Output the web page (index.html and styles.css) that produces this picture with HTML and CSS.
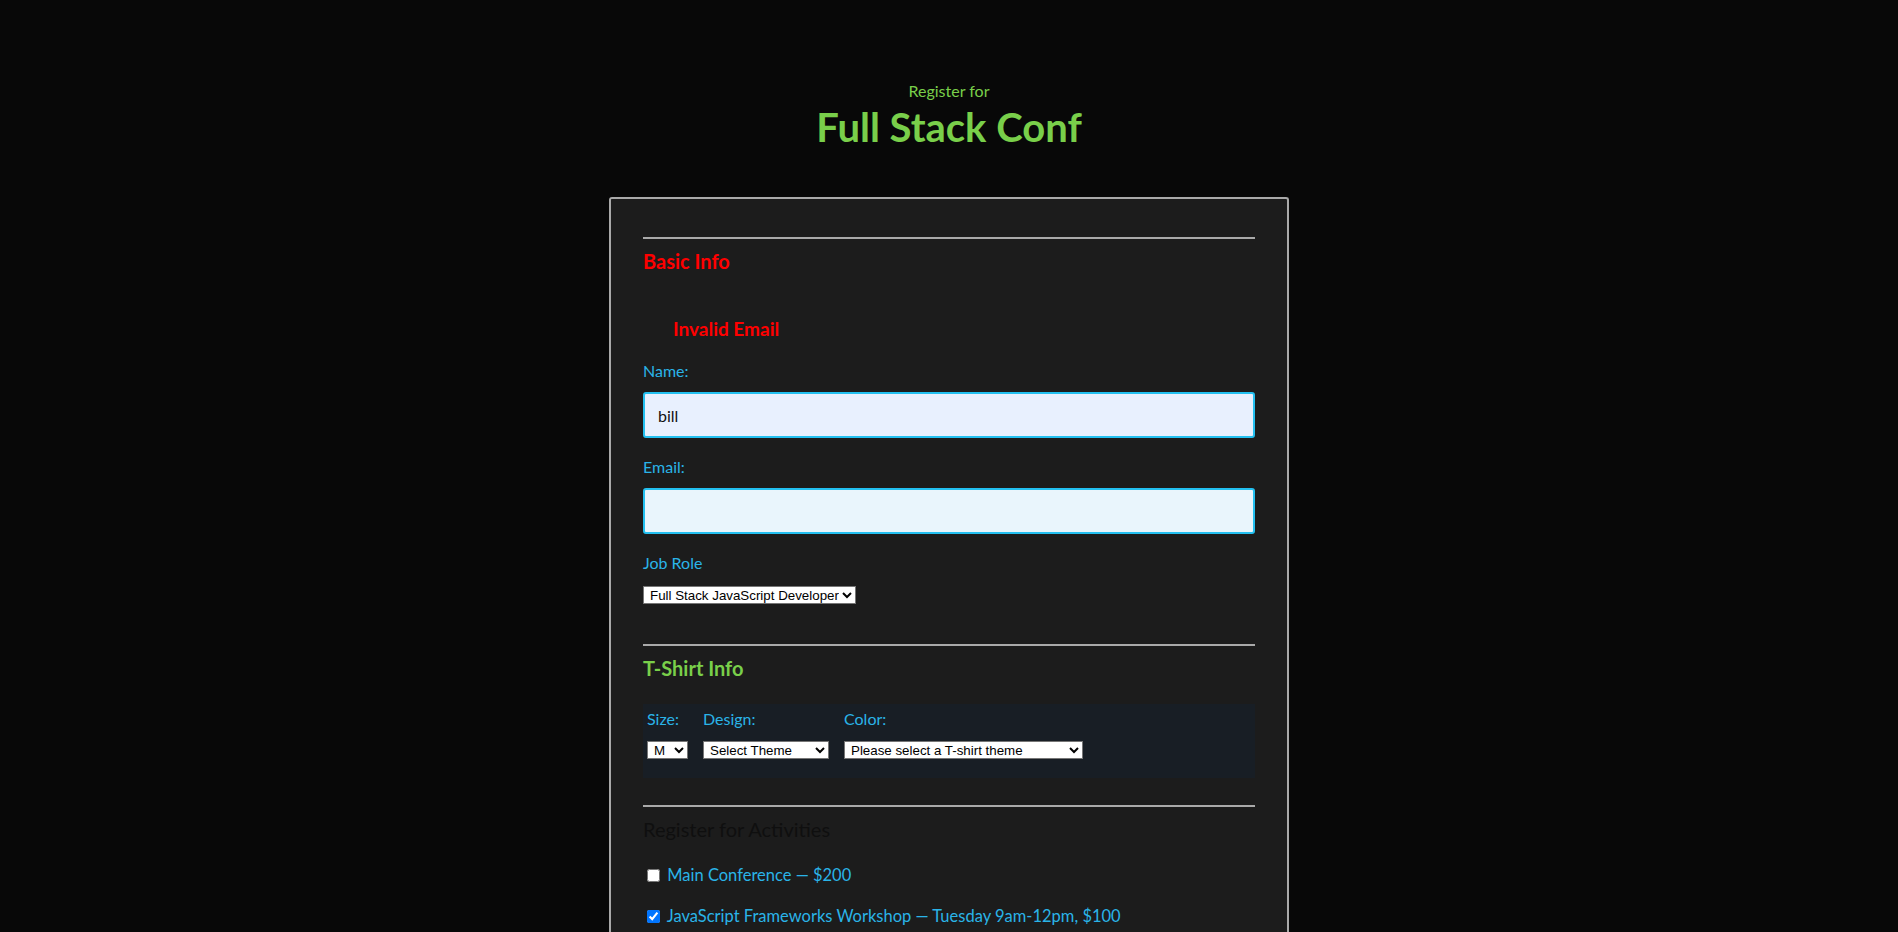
FILE: index.html
```html
<!DOCTYPE html>
<html lang="en">
<head>
<meta charset="utf-8">
<title>Full Stack Conf</title>
<link rel="stylesheet" href="styles.css">
</head>
<body>
<header class="header">
  <p class="header-sub">Register for</p>
  <h1 class="header-title">Full Stack Conf</h1>
</header>
<form class="card">
  <section class="section">
    <hr class="rule">
    <h2 class="section-title error">Basic Info</h2>
    <p class="error-msg">Invalid Email</p>
    <label class="field-label" for="name">Name:</label>
    <input class="text-input autofill" id="name" type="text" value="bill">
    <label class="field-label" for="mail">Email:</label>
    <input class="text-input" id="mail" type="email">
    <label class="field-label" for="title">Job Role</label>
    <select class="select select-role" id="title">
      <option>Full Stack JavaScript Developer</option>
    </select>
  </section>
  <section class="section">
    <hr class="rule rule-gap">
    <h2 class="section-title ok">T-Shirt Info</h2>
    <div class="shirt-box">
      <div class="shirt-col">
        <label class="shirt-label" for="size">Size:</label>
        <select class="select select-size" id="size"><option>M</option></select>
      </div>
      <div class="shirt-col">
        <label class="shirt-label" for="design">Design:</label>
        <select class="select select-design" id="design"><option>Select Theme</option></select>
      </div>
      <div class="shirt-col">
        <label class="shirt-label" for="color">Color:</label>
        <select class="select select-color" id="color"><option>Please select a T-shirt theme</option></select>
      </div>
    </div>
  </section>
  <section class="section">
    <hr class="rule rule-gap2">
    <h2 class="activities-title">Register for Activities</h2>
    <label class="activity"><input type="checkbox" class="check"> Main Conference — $200</label>
    <label class="activity"><input type="checkbox" class="check" checked> JavaScript Frameworks Workshop — Tuesday 9am-12pm, $100</label>
  </section>
</form>
</body>
</html>
```
FILE: styles.css
```css
html, body {
  margin: 0;
  padding: 0;
}
body {
  background: #080808;
  font-family: Lato, "Noto Sans", sans-serif;
  color: #2ab4e8;
}
.header {
  text-align: center;
  padding-top: 81px;
  padding-bottom: 46px;
  color: #79cf4a;
}
.header-sub {
  margin: 0;
  font-size: 16px;
  line-height: 20px;
}
.header-title {
  margin: 2px 0 0;
  font-size: 40px;
  line-height: 48px;
  font-weight: 700;
}
.card {
  box-sizing: border-box;
  width: 680px;
  margin: 0 auto;
  background: #1c1c1c;
  border: 2px solid #a9a9a9;
  border-bottom: none;
  border-radius: 3px 3px 0 0;
  padding: 38px 32px 60px;
  display: flex;
  flex-direction: column;
}
.section {
  display: flex;
  flex-direction: column;
  align-items: flex-start;
}
.rule {
  align-self: stretch;
  margin: 0;
  border: none;
  height: 2px;
  background: #a9a9a9;
}
.rule-gap { margin-top: 40px; }
.rule-gap2 { margin-top: 27px; }
.section-title {
  margin: 10px 0 0;
  font-size: 20px;
  line-height: 24px;
  font-weight: 700;
}
.error { color: #ff0000; }
.ok { color: #79cf4a; }
.error-msg {
  margin: 44px 0 0 30px;
  font-size: 19px;
  line-height: 24px;
  font-weight: 700;
  color: #ff0000;
}
.field-label {
  margin-top: 19px;
  font-size: 16px;
  line-height: 20px;
  color: #2ab4e8;
}
.error-msg + .field-label { margin-top: 20px; }
.text-input {
  box-sizing: border-box;
  align-self: stretch;
  margin-top: 11px;
  height: 46px;
  border: 2px solid #23c0f0;
  border-radius: 3px;
  background: #e9f5fc;
  padding: 0 13px;
  font-family: Lato, "Noto Sans", sans-serif;
  font-size: 16px;
  color: #111;
  outline: none;
}
.autofill { background: #e8f0fe; }
.select {
  box-sizing: border-box;
  height: 18px;
  margin: 13px 0 0;
  font-family: "Liberation Sans", Arial, sans-serif;
  font-size: 13.33px;
  background: #fff;
  color: #000;
  border: 1px solid #767676;
  border-radius: 0;
  padding: 0 0 0 2px;
}
.select-role { width: 213px; }
.shirt-box {
  align-self: stretch;
  margin-top: 24px;
  background: #181e25;
  padding: 5px 4px 19px;
  display: flex;
  gap: 15px;
}
.shirt-col {
  display: flex;
  flex-direction: column;
  align-items: flex-start;
}
.shirt-label {
  font-size: 16px;
  line-height: 20px;
  color: #2ab4e8;
}
.shirt-col .select { margin-top: 12px; }
.select-size { width: 41px; }
.select-design { width: 126px; }
.select-color { width: 239px; }
.activities-title {
  margin: 10px 0 0;
  font-size: 20px;
  line-height: 24px;
  font-weight: 400;
  color: #0f0f0f;
}
.activity {
  display: flex;
  align-items: center;
  margin-top: 21px;
  font-size: 16.5px;
  line-height: 20px;
  color: #2ab4e8;
  white-space: pre;
}
.activities-title + .activity { margin-top: 24px; }
.check {
  width: 13px;
  height: 13px;
  margin: 0 3px 0 4px;
}
```
